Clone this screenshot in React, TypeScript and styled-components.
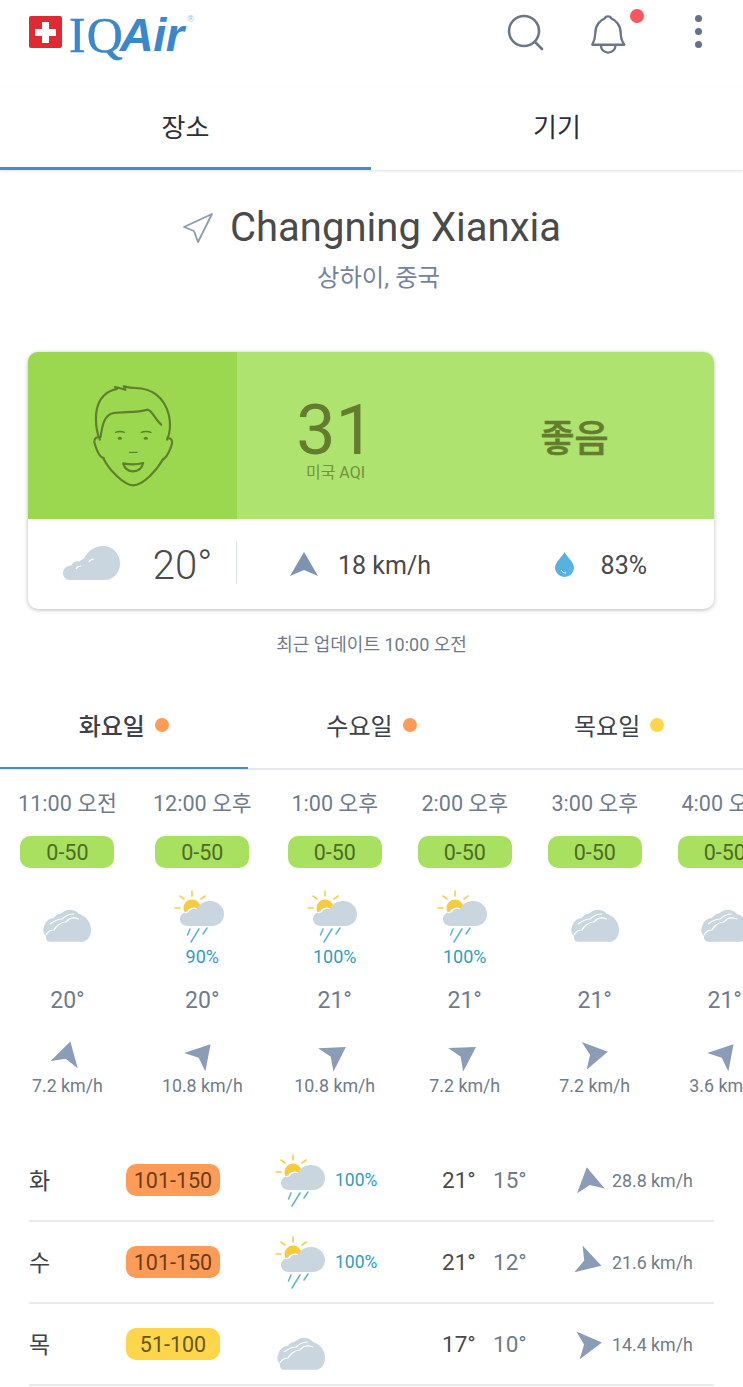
import styled, { createGlobalStyle } from "styled-components";

const hours = [
  { time: "11:00 오전", aqi: "0-50", rain: "", temp: "20°", deg: 15, wind: "7.2 km/h" },
  { time: "12:00 오후", aqi: "0-50", rain: "90%", temp: "20°", deg: 41, wind: "10.8 km/h" },
  { time: "1:00 오후", aqi: "0-50", rain: "100%", temp: "21°", deg: 57, wind: "10.8 km/h" },
  { time: "2:00 오후", aqi: "0-50", rain: "100%", temp: "21°", deg: 58, wind: "7.2 km/h" },
  { time: "3:00 오후", aqi: "0-50", rain: "", temp: "21°", deg: 80, wind: "7.2 km/h" },
  { time: "4:00 오후", aqi: "0-50", rain: "", temp: "21°", deg: 41, wind: "3.6 km/h" },
];

const days = [
  { day: "화", aqi: "101-150", level: "orange", rain: "100%", hi: "21°", lo: "15°", deg: -10, wind: "28.8 km/h" },
  { day: "수", aqi: "101-150", level: "orange", rain: "100%", hi: "21°", lo: "12°", deg: 107, wind: "21.6 km/h" },
  { day: "목", aqi: "51-100", level: "yellow", rain: "", hi: "17°", lo: "10°", deg: 83, wind: "14.4 km/h" },
];

const levels: Record<string, { bg: string; fg: string }> = {
  green: { bg: "#a8e05f", fg: "#4f6b26" },
  orange: { bg: "#fe9b57", fg: "#6b3d1b" },
  yellow: { bg: "#fdd64b", fg: "#66570f" },
};

const RainCloud = () => (
  <svg width="52" height="54" viewBox="0 0 52 54">
    <circle cx="18" cy="19" r="8.5" fill="#f8cb3a" />
    <g stroke="#f6d04d" strokeWidth="1.6" strokeLinecap="round">
      <path d="M18 2v5M1 19h5M6 7l4 3M31 7l-4 3" />
    </g>
    <path
      d="M14 37C8 37 6 33 6 30c0-4 3-6 6-7 1-4 7-6 11-3 3-6 8-8 13-8 8 0 14 6 14 13 0 7-5 12-12 12Z"
      fill="#c9d5df"
    />
    <path d="M11 24c1-1 2-1 3-1 1-3 6-5 9-3" fill="none" stroke="#fff" strokeWidth="1.2" />
    <g stroke="#5fb2d2" strokeWidth="1.5" strokeLinecap="round">
      <path d="M16 40l-2.5 6M25 40l-8 13M33 39l-4 6" />
    </g>
  </svg>
);

const Clouds = () => (
  <svg width="52" height="54" viewBox="0 0 52 54">
    <path
      d="M9 52.7C6 52.7 4.500 50 5 47 2 44 1.500 41 3 38 4 32 9 29 13 29 15 25 19 25 21 24 24 20 33 19 38 25 45 27 50 33 50 41 50 48 46 52.700 41 52.700Z"
      fill="#c9d5df"
    />
    <path
      d="M5 46C7 42 10 41 13 41 15 37 20 33 25 33 28 29 33 28 38 30M9 35C13 32 17 30 21 30 24 27 28 25 33 25"
      fill="none"
      stroke="#fff"
      strokeWidth="1.2"
    />
  </svg>
);

const Arrow = ({ deg, size = 28 }: { deg: number; size?: number }) => (
  <ArrowSvg $deg={deg} width={size} height={size} viewBox="0 0 28 28">
    <path d="M14 1 28 25 14 19 0 25Z" fill="currentColor" />
  </ArrowSvg>
);

export default function App() {
  return (
    <Page>
      <GlobalStyle />
      <Header>
        <Logo>
          <Flag>
            <svg width="33" height="32" viewBox="0 0 33 32">
              <path d="M13 6h7v7h7v7h-7v7h-7v-7H6v-7h7Z" fill="#fff" />
            </svg>
          </Flag>
          <LogoSerif>IQ</LogoSerif>
          <LogoSans>Air</LogoSans>
          <LogoMark>®</LogoMark>
        </Logo>
        <HeaderIcons>
          <SearchIcon width="38" height="38" viewBox="0 0 38 38" fill="none" stroke="#6b7688" strokeWidth="2.6" strokeLinecap="round">
            <circle cx="18" cy="17" r="15" />
            <path d="M29 28l7 7" />
          </SearchIcon>
          <BellWrap>
            <svg width="38" height="41" viewBox="390 38 115 122" fill="none" stroke="#6b7688" strokeWidth="7" strokeLinejoin="round">
              <path d="M400 130h97c-7-10-11-18-11-35 0-25-16-40-29-45-2-8-17-8-19 0-13 5-29 20-29 45 0 17-4 25-9 35Z" />
              <path d="M426 132a22 22 0 0 0 44 0" />
            </svg>
            <BellDot />
          </BellWrap>
          <MoreDots>
            <i />
            <i />
            <i />
          </MoreDots>
        </HeaderIcons>
      </Header>

      <MainTabs>
        <MainTab $active>장소</MainTab>
        <MainTab>기기</MainTab>
      </MainTabs>

      <Location>
        <TitleRow>
          <svg width="32" height="32" viewBox="0 0 32 32" fill="none" stroke="#8a9bb5" strokeWidth="1.8" strokeLinejoin="round">
            <path d="M30 2 2 15l10 4 4 11Z" />
          </svg>
          <Title>Changning Xianxia</Title>
        </TitleRow>
        <Subtitle>상하이, 중국</Subtitle>
      </Location>

      <Card>
        <AqiBand>
          <FacePanel>
            <svg width="82" height="105" viewBox="215 110 245 315" fill="none" stroke="#5f7f2d" strokeWidth="6.500" strokeLinecap="round" strokeLinejoin="round">
              <path d="M238 280c-16-40-16-90 2-120 15-22 35-30 50-32l-7-6c12 2 22 6 32 8l-5-10c15 4 25 5 35 5 45 0 85 25 100 80 7 30 3 55-5 75" />
              <path d="M240 272c5-32 10-67 40-72 30-5 70 0 100-10 15 0 20 25 42 45" />
              <path d="M236 272c-14 0-18 13-12 25 6 18 16 38 26 38" />
              <path d="M441 275c14 0 17 10 11 25-7 20-17 35-25 40" />
              <path d="M248 335c17 35 62 82 90 82 30 0 72-47 90-79" />
              <path d="M285 258q13-5 27 0M362 258q14-5 30 0" strokeWidth="4" />
              <path d="M327 318h23" strokeWidth="4" />
              <path d="M308 351q32 7 60-1-6 25-30 25-23 0-30-24Z" />
              <ellipse cx="298" cy="276" rx="6" ry="4.500" fill="#5f7f2d" stroke="none" />
              <ellipse cx="376" cy="276" rx="6" ry="4.500" fill="#5f7f2d" stroke="none" />
            </svg>
          </FacePanel>
          <AqiValue>
            <AqiNumber>31</AqiNumber>
            <AqiUnit>미국 AQI</AqiUnit>
          </AqiValue>
          <AqiLabel>좋음</AqiLabel>
        </AqiBand>
        <WeatherBar>
          <NowWeather>
            <svg width="58" height="35" viewBox="0 0 58 35">
              <path
                d="M7 34C3 34 0 31 0 27.500 0 23 3 20 8 19.500c2-4 5-5 8-4 1.500-1 3-2 5-3C25 4 33 0 40 0c10 0 17 8 17 17.500C57 27 50 34 42 34Z"
                fill="#c9d5df"
              />
              <path d="M13 23c1-2 3-3 5-3M26 16c1-2 3-3 5-3" fill="none" stroke="#fff" strokeWidth="1.200" />
            </svg>
            <NowTemp>20°</NowTemp>
          </NowWeather>
          <WindNow>
            <Arrow deg={0} />
            <BarText>18 km/h</BarText>
          </WindNow>
          <HumidityNow>
            <svg width="19" height="25" viewBox="0 0 19 25">
              <path d="M9.500 0C12 5 19 10 19 16a9.500 9 0 0 1-19 0C0 10 7 5 9.500 0Z" fill="#56b3e0" />
              <path d="M6 18c1 2 3 3 5 3" fill="none" stroke="#fff" strokeWidth="1" />
            </svg>
            <BarText>83%</BarText>
          </HumidityNow>
        </WeatherBar>
      </Card>

      <UpdatedAt>최근 업데이트 10:00 오전</UpdatedAt>

      <DayTabs>
        <DayTab $active>
          화요일 <Dot $level="orange" />
        </DayTab>
        <DayTab>
          수요일 <Dot $level="orange" />
        </DayTab>
        <DayTab>
          목요일 <Dot $level="yellow" />
        </DayTab>
      </DayTabs>

      <HourStrip>
        {hours.map((h) => (
          <HourCol key={h.time}>
            <HourTime>{h.time}</HourTime>
            <AqiBadge $level="green">{h.aqi}</AqiBadge>
            <HourWeather>
              {h.rain ? (
                <HourRainIcon>
                  <RainCloud />
                </HourRainIcon>
              ) : (
                <Clouds />
              )}
              {h.rain && <HourRain>{h.rain}</HourRain>}
            </HourWeather>
            <HourTemp>{h.temp}</HourTemp>
            <HourArrow>
              <Arrow deg={h.deg} />
            </HourArrow>
            <HourWind>{h.wind}</HourWind>
          </HourCol>
        ))}
      </HourStrip>

      <DayList>
        {days.map((d) => (
          <DayRow key={d.day}>
            <DayName>{d.day}</DayName>
            <div>
              <AqiBadge $level={d.level}>{d.aqi}</AqiBadge>
            </div>
            <DayWeather>
              {d.rain ? <RainCloud /> : <Clouds />}
              {d.rain && <DayRain>{d.rain}</DayRain>}
            </DayWeather>
            <DayHigh>{d.hi}</DayHigh>
            <DayLow>{d.lo}</DayLow>
            <DayWind>
              <Arrow deg={d.deg} />
              <span>{d.wind}</span>
            </DayWind>
          </DayRow>
        ))}
      </DayList>
    </Page>
  );
}

const GlobalStyle = createGlobalStyle`
  html, body {
    margin: 0;
    padding: 0;
    background: #fff;
  }
  body {
    font-family: Roboto, "Noto Sans CJK KR", sans-serif;
  }
`;

const Page = styled.div`
  width: 743px;
  height: 1387px;
  overflow: hidden;
  background: #fff;
`;

const ArrowSvg = styled.svg<{ $deg: number }>`
  display: block;
  color: #8b9cb6;
  transform: rotate(${(p) => p.$deg}deg);
`;

const Header = styled.div`
  height: 88px;
  padding: 12px 41px 0 29px;
  box-sizing: border-box;
  display: flex;
  justify-content: space-between;
  align-items: flex-start;
`;

const Logo = styled.div`
  display: flex;
  align-items: flex-start;
  color: #3a87cc;
  height: 50px;
`;

const Flag = styled.div`
  width: 33px;
  height: 32px;
  margin-top: 4px;
  margin-right: 7px;
  border-radius: 2px;
  background: #de2a30;

  svg {
    display: block;
  }
`;

const LogoSerif = styled.span`
  font-family: "Liberation Serif", serif;
  font-size: 50px;
  line-height: 46px;
  letter-spacing: 1px;
  -webkit-text-stroke: 0.5px #3a87cc;
`;

const LogoSans = styled.span`
  font-family: "Liberation Sans", sans-serif;
  font-weight: 700;
  font-style: italic;
  font-size: 47px;
  line-height: 46px;
  letter-spacing: -0.5px;
  margin-left: -4px;
`;

const LogoMark = styled.span`
  font-family: "Liberation Sans", sans-serif;
  font-size: 9px;
  line-height: 14px;
  color: #9db8d2;
  margin-left: 4px;
`;

const HeaderIcons = styled.div`
  display: flex;
  align-items: flex-start;
  gap: 45px;
`;

const SearchIcon = styled.svg`
  display: block;
  margin-top: 2px;
`;

const BellWrap = styled.div`
  position: relative;
  width: 62px;
  margin-top: 2px;
  margin-right: -1px;
`;

const BellDot = styled.span`
  position: absolute;
  top: -5px;
  left: 41px;
  width: 14px;
  height: 14px;
  border-radius: 50%;
  background: #f9565f;
`;

const MoreDots = styled.div`
  display: flex;
  flex-direction: column;
  gap: 6px;
  margin-top: 3px;

  i {
    display: block;
    width: 7px;
    height: 7px;
    border-radius: 50%;
    background: #66728a;
  }
`;

const MainTabs = styled.div`
  display: grid;
  grid-template-columns: 371px 1fr;
  height: 82px;
  box-shadow: 0 1px 2px rgba(0, 0, 0, 0.12);
`;

const MainTab = styled.div<{ $active?: boolean }>`
  display: flex;
  align-items: center;
  justify-content: center;
  padding-bottom: 4px;
  font-size: 26px;
  color: #2b2f38;
  box-sizing: border-box;
  border-bottom: 3px solid ${(p) => (p.$active ? "#4a8ccb" : "transparent")};
`;

const Location = styled.div`
  padding-top: 36px;
  display: flex;
  flex-direction: column;
  align-items: center;
`;

const TitleRow = styled.div`
  display: flex;
  align-items: center;
  gap: 16px;
  height: 44px;
`;

const Title = styled.div`
  font-size: 40px;
  line-height: 44px;
  letter-spacing: 0.03px;
  color: #4a4a4a;
`;

const Subtitle = styled.div`
  margin-top: 12px;
  padding-left: 14px;
  font-size: 24.4px;
  line-height: 32px;
  color: #75839c;
`;

const Card = styled.div`
  margin: 58px 29px 0 28px;
  height: 257px;
  border-radius: 10px;
  overflow: hidden;
  background: #fff;
  box-shadow: 0 1px 4px rgba(0, 0, 0, 0.28);
`;

const AqiBand = styled.div`
  height: 167px;
  display: grid;
  grid-template-columns: 209px 192px 1fr;
  background: #aee36f;
  color: #5f7a2c;
`;

const FacePanel = styled.div`
  background: #9bd84f;
  display: flex;
  align-items: center;
  justify-content: center;
`;

const AqiValue = styled.div`
  display: flex;
  flex-direction: column;
  align-items: center;
  padding-top: 43px;
  padding-left: 5px;
`;

const AqiNumber = styled.div`
  font-size: 70px;
  font-weight: 400;
  height: 60px;
  line-height: 70px;
  color: #647c2e;
`;

const AqiUnit = styled.div`
  font-size: 16px;
  line-height: 18px;
  margin-top: 9px;
  color: #75913f;
`;

const AqiLabel = styled.div`
  display: flex;
  align-items: center;
  justify-content: center;
  padding-left: 6px;
  font-size: 37px;
  font-weight: 500;
  -webkit-text-stroke: 0.6px #647c2e;
  color: #647c2e;
`;

const WeatherBar = styled.div`
  height: 90px;
  display: flex;
  align-items: center;
`;

const NowWeather = styled.div`
  width: 209px;
  height: 42px;
  margin-top: -2px;
  padding-left: 11px;
  box-sizing: border-box;
  display: flex;
  align-items: center;
  justify-content: center;
  gap: 32px;
  border-right: 1px solid #dde1e6;
`;

const NowTemp = styled.div`
  font-size: 40px;
  font-weight: 300;
  line-height: 42px;
  padding-top: 5px;
  color: #4a4a4a;
`;

const WindNow = styled.div`
  margin-left: 53px;
  display: flex;
  align-items: center;
  gap: 20px;
  svg {
    margin-top: 2px;
    color: #7c93b2;
  }
`;

const BarText = styled.div`
  font-size: 25px;
  line-height: 30px;
  padding-top: 4px;
  color: #4a4a4a;
`;

const HumidityNow = styled.div`
  margin-left: auto;
  margin-right: 67px;
  display: flex;
  align-items: center;
  gap: 27px;
`;

const UpdatedAt = styled.div`
  margin-top: 24px;
  height: 24px;
  line-height: 24px;
  text-align: center;
  font-size: 18px;
  color: #6f7b8c;
`;

const DayTabs = styled.div`
  margin-top: 33px;
  height: 80px;
  display: grid;
  grid-template-columns: repeat(3, 1fr);
  box-sizing: border-box;
  border-bottom: 2px solid #e4e7eb;
`;

const DayTab = styled.div<{ $active?: boolean }>`
  display: flex;
  align-items: center;
  justify-content: center;
  gap: 10px;
  height: 79px;
  padding-bottom: 8px;
  box-sizing: border-box;
  font-size: 24px;
  font-weight: ${(p) => (p.$active ? 500 : 400)};
  color: #3d4148;
  border-bottom: 2px solid ${(p) => (p.$active ? "#4a8ccb" : "transparent")};
`;

const Dot = styled.span<{ $level: string }>`
  width: 14px;
  height: 14px;
  border-radius: 50%;
  background: ${(p) => levels[p.$level].bg};
`;

const HourStrip = styled.div`
  display: flex;
  gap: 36px;
  padding: 22px 0 0 18px;
  width: 900px;
`;

const HourCol = styled.div`
  display: flex;
  flex-direction: column;
  align-items: center;
  min-width: 94px;
`;

const HourTime = styled.div`
  height: 24px;
  margin-bottom: 20px;
  line-height: 24px;
  font-size: 21.6px;
  color: #6f7b8c;
  white-space: nowrap;
`;

const AqiBadge = styled.div<{ $level: string }>`
  width: 94px;
  height: 32px;
  border-radius: 10px;
  display: flex;
  align-items: center;
  justify-content: center;
  font-size: 21.5px;
  background: ${(p) => levels[p.$level].bg};
  color: ${(p) => levels[p.$level].fg};
`;

const HourWeather = styled.div`
  margin-top: 21px;
  height: 98px;
  display: flex;
  flex-direction: column;
  align-items: center;
`;

const HourRainIcon = styled.div`
  height: 54px;
  margin-right: 4px;
`;

const HourRain = styled.div`
  margin-top: 4px;
  line-height: 20px;
  font-size: 18px;
  color: #2f9cbf;
`;

const HourTemp = styled.div`
  height: 26px;
  line-height: 26px;
  margin-top: 1px;
  margin-bottom: -1px;
  font-size: 23px;
  color: #6f7b8c;
`;

const HourArrow = styled.div`
  margin-top: 27px;
`;

const HourWind = styled.div`
  margin-top: 8px;
  line-height: 20px;
  font-size: 17.8px;
  color: #6f7b8c;
  white-space: nowrap;
`;

const DayList = styled.div`
  margin: 44px 29px 0;
`;

const DayRow = styled.div`
  height: 82px;
  box-sizing: border-box;
  display: grid;
  grid-template-columns: 97px 149px 167px 51px 82px 1fr;
  align-items: center;
  border-bottom: 2px solid #e8ebee;
`;

const DayName = styled.div`
  font-size: 23px;
  padding-bottom: 2px;
  color: #3d4148;
`;

const DayWeather = styled.div`
  display: flex;
  align-items: center;
  gap: 8px;
`;

const DayRain = styled.div`
  font-size: 17.5px;
  color: #2f9cbf;
`;

const DayHigh = styled.div`
  font-size: 22.5px;
  color: #4a4a4a;
`;

const DayLow = styled.div`
  font-size: 22.5px;
  color: #6f7b8c;
`;

const DayWind = styled.div`
  display: flex;
  align-items: center;
  gap: 9px;
  font-size: 17.8px;
  color: #6f7b8c;
`;
